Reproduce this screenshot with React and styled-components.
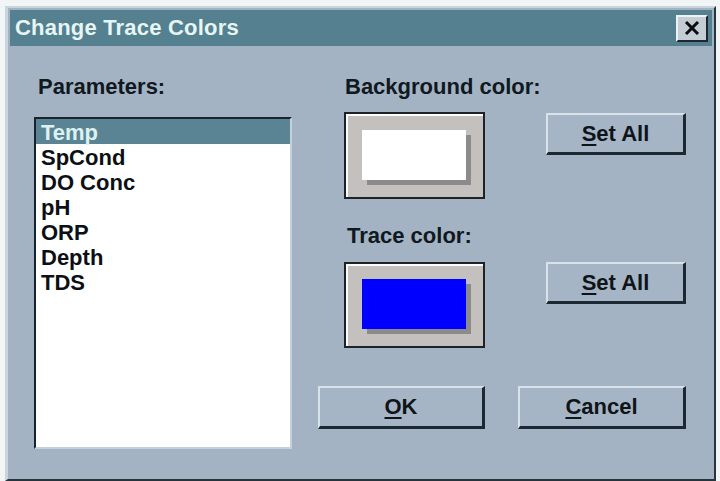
import React from 'react';
import styled, { createGlobalStyle } from 'styled-components';

const GlobalStyle = createGlobalStyle`
  html, body {
    margin: 0;
    padding: 0;
    background: #f2f5f6;
    font-family: 'Liberation Sans', Arial, sans-serif;
  }
`;

const Window = styled.div`
  box-sizing: border-box;
  margin: 6px 4px 0 5px;
  height: 475px;
  display: flex;
  flex-direction: column;
  background: #a4b3c4;
  border-top: 2px solid #c9d4dc;
  border-left: 3px solid #c9d4dc;
  border-right: 2px solid #26343c;
  border-bottom: 2px solid #26343c;
  padding: 2px;
`;

const TitleBar = styled.div`
  height: 36px;
  flex: none;
  display: flex;
  align-items: center;
  justify-content: space-between;
  background: #55808f;
  padding: 0 4px 0 5px;
`;

const Title = styled.span`
  color: #e6f6f4;
  font-size: 22px;
  font-weight: bold;
  letter-spacing: 0.2px;
`;

const CloseButton = styled.button`
  box-sizing: border-box;
  width: 32px;
  height: 27px;
  padding: 0;
  display: flex;
  align-items: center;
  justify-content: center;
  background: #c4ccd4;
  border-top: 2px solid #eef2f4;
  border-left: 2px solid #eef2f4;
  border-right: 2px solid #1c2830;
  border-bottom: 2px solid #1c2830;
`;

const Content = styled.div`
  flex: 1;
  display: flex;
  padding: 28px 0 0 24px;
`;

const LeftColumn = styled.div`
  display: flex;
  flex-direction: column;
  width: 258px;
`;

const Label = styled.div`
  font-size: 22px;
  font-weight: bold;
  line-height: 25px;
  color: #101820;
  padding-left: ${p => p.$indent || 0}px;
  margin-top: ${p => p.$top || 0}px;
`;

const ListBox = styled.ul`
  box-sizing: border-box;
  list-style: none;
  margin: 18px 0 0;
  padding: 0;
  height: 332px;
  background: #ffffff;
  border-top: 2px solid #18242c;
  border-left: 2px solid #18242c;
  border-right: 2px solid #c4d0da;
  border-bottom: 2px solid #c4d0da;
`;

const ListItem = styled.li`
  font-size: 22px;
  font-weight: bold;
  line-height: 23px;
  padding: 2px 0 0 5px;
  color: ${p => (p.$selected ? '#dcf2f2' : '#0c1014')};
  background: ${p => (p.$selected ? '#5a8494' : 'transparent')};
`;

const RightColumn = styled.div`
  display: flex;
  flex-direction: column;
  margin-left: 26px;
`;

const SwatchRow = styled.div`
  display: flex;
  align-items: flex-start;
  margin: ${p => p.$top}px 0 0 26px;
`;

const Swatch = styled.div`
  box-sizing: border-box;
  width: 141px;
  height: ${p => p.$h}px;
  display: flex;
  align-items: center;
  justify-content: center;
  background: #c3c0be;
  border: 2px solid #1d2226;
  box-shadow: inset 2px 2px 0 #fbfbfb;
`;

const SwatchColor = styled.div`
  width: 104px;
  height: 50px;
  margin: 0 2px 2px 0;
  background: ${p => p.$color};
  box-shadow: 5px 5px 0 #8c8a8a;
`;

const Button = styled.button`
  box-sizing: border-box;
  width: ${p => p.$w}px;
  height: ${p => p.$h}px;
  margin-top: ${p => p.$top || 0}px;
  margin-left: ${p => p.$left || 0}px;
  padding: 0;
  background: #a6b5c5;
  border-top: 2px solid #d8e2ea;
  border-left: 2px solid #d8e2ea;
  border-right: 3px solid #1c2832;
  border-bottom: 3px solid #1c2832;
  font-family: 'Liberation Sans', Arial, sans-serif;
  font-size: 22px;
  font-weight: bold;
  color: #0e1418;
`;

const Key = styled.span`
  text-decoration: underline;
  text-decoration-thickness: 2px;
  text-underline-offset: 3px;
`;

const ButtonRow = styled.div`
  display: flex;
  gap: 33px;
  margin-top: 38px;
`;

const params = ['Temp', 'SpCond', 'DO Conc', 'pH', 'ORP', 'Depth', 'TDS'];

export default function App() {
  return (
    <>
      <GlobalStyle />
      <Window>
        <TitleBar>
          <Title>Change Trace Colors</Title>
          <CloseButton type="button" aria-label="Close">
            <svg width="16" height="14" viewBox="0 0 16 14">
              <path d="M2 1 L14 13 M14 1 L2 13" stroke="#0a0e10" strokeWidth="3" />
            </svg>
          </CloseButton>
        </TitleBar>
        <Content>
          <LeftColumn>
            <Label $indent={4}>Parameters:</Label>
            <ListBox>
              {params.map((p, i) => (
                <ListItem key={p} $selected={i === 0}>{p}</ListItem>
              ))}
            </ListBox>
          </LeftColumn>
          <RightColumn>
            <Label $indent={27}>Background color:</Label>
            <SwatchRow $top={13}>
              <Swatch $h={87}>
                <SwatchColor $color="#ffffff" />
              </Swatch>
              <Button type="button" $w={140} $h={42} $top={1} $left={61}>
                <Key>S</Key>et All
              </Button>
            </SwatchRow>
            <Label $indent={29} $top={24}>Trace color:</Label>
            <SwatchRow $top={14}>
              <Swatch $h={86}>
                <SwatchColor $color="#0000ff" />
              </Swatch>
              <Button type="button" $w={140} $h={42} $left={61}>
                <Key>S</Key>et All
              </Button>
            </SwatchRow>
            <ButtonRow>
              <Button type="button" $w={167} $h={43}>
                <Key>O</Key>K
              </Button>
              <Button type="button" $w={168} $h={43}>
                <Key>C</Key>ancel
              </Button>
            </ButtonRow>
          </RightColumn>
        </Content>
      </Window>
    </>
  );
}
